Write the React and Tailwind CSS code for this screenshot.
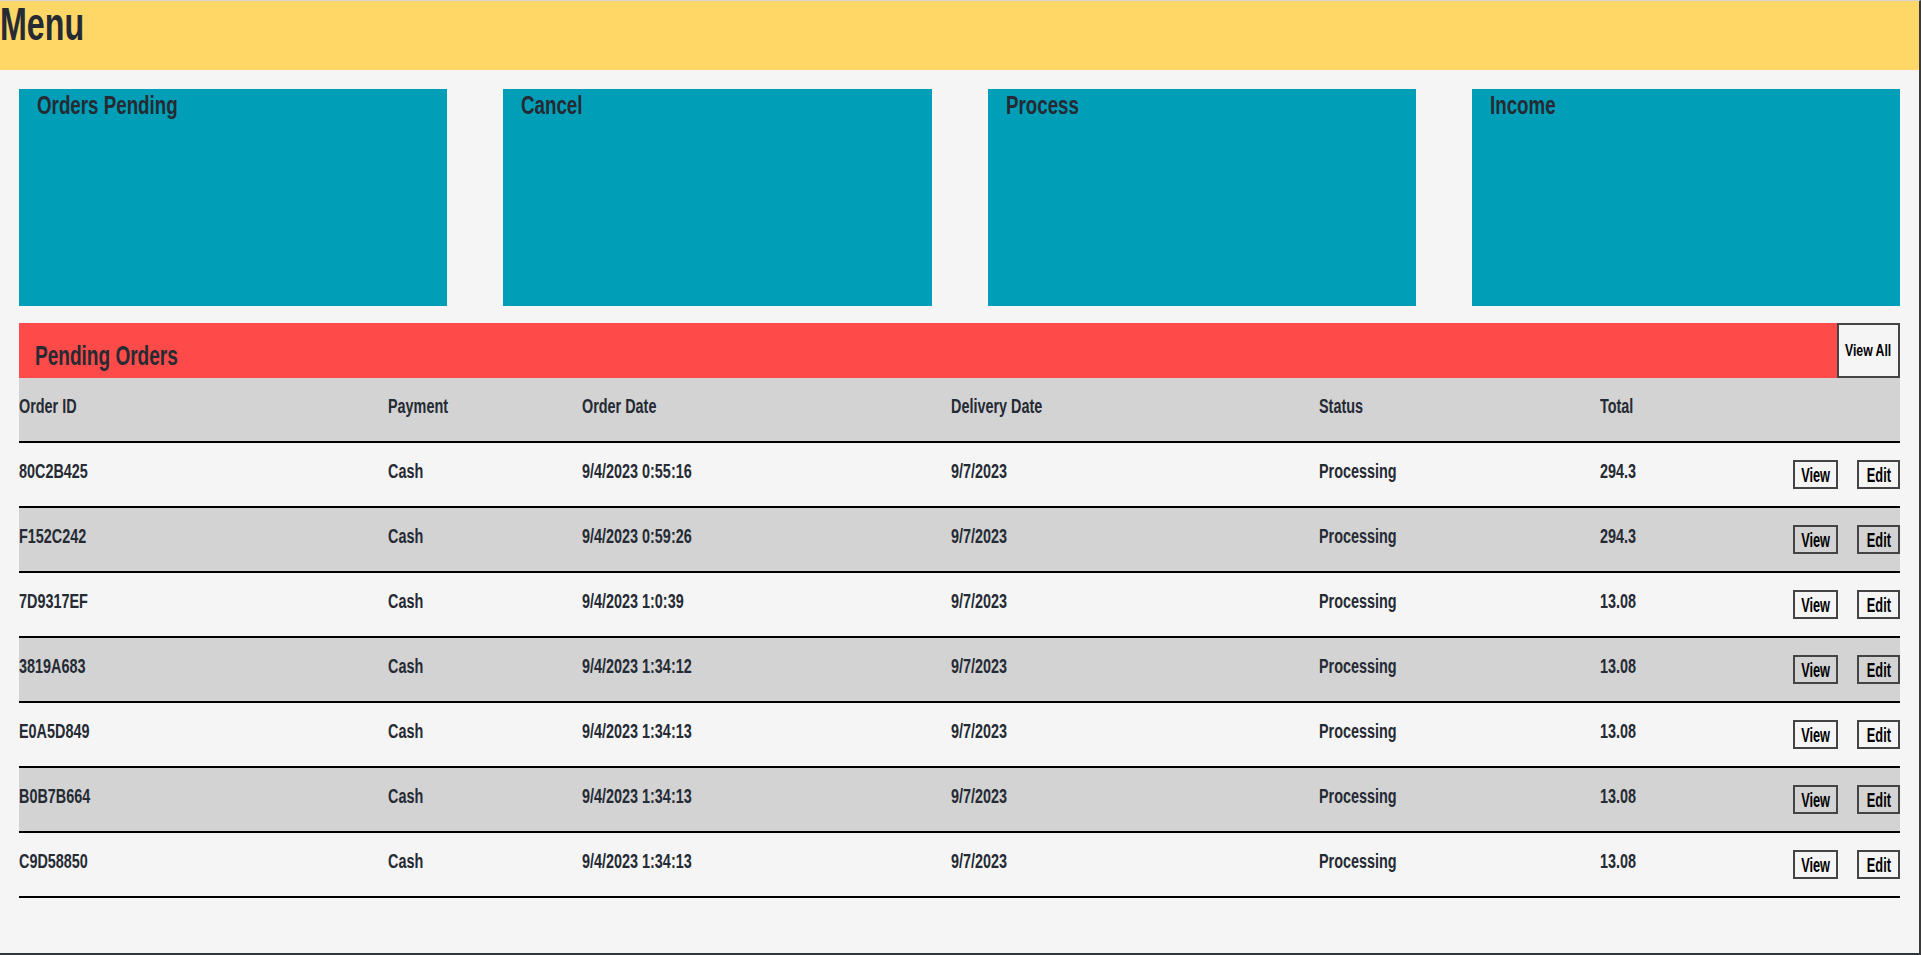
import React from 'react';

const orders = [
  { id: '80C2B425', payment: 'Cash', orderDate: '9/4/2023 0:55:16', delivery: '9/7/2023', status: 'Processing', total: '294.3' },
  { id: 'F152C242', payment: 'Cash', orderDate: '9/4/2023 0:59:26', delivery: '9/7/2023', status: 'Processing', total: '294.3' },
  { id: '7D9317EF', payment: 'Cash', orderDate: '9/4/2023 1:0:39', delivery: '9/7/2023', status: 'Processing', total: '13.08' },
  { id: '3819A683', payment: 'Cash', orderDate: '9/4/2023 1:34:12', delivery: '9/7/2023', status: 'Processing', total: '13.08' },
  { id: 'E0A5D849', payment: 'Cash', orderDate: '9/4/2023 1:34:13', delivery: '9/7/2023', status: 'Processing', total: '13.08' },
  { id: 'B0B7B664', payment: 'Cash', orderDate: '9/4/2023 1:34:13', delivery: '9/7/2023', status: 'Processing', total: '13.08' },
  { id: 'C9D58850', payment: 'Cash', orderDate: '9/4/2023 1:34:13', delivery: '9/7/2023', status: 'Processing', total: '13.08' },
];

const cards = ['Orders Pending', 'Cancel', 'Process', 'Income'];

const cols = 'grid grid-cols-[369px_194px_369px_368px_281px_1fr] leading-none';

// condensed look: the reference uses a narrow display face, squeeze Arial-metric text
const Cell = ({ children }) => (
  <span className="inline-block origin-left scale-x-[0.72] whitespace-nowrap leading-none">{children}</span>
);

const SmallBtn = ({ children, w }) => (
  <button className={`${w} h-[29px] border-2 border-[#444] text-[20px] leading-none text-black flex items-center justify-center`}>
    <span className="inline-block scale-x-[0.64] whitespace-nowrap">{children}</span>
  </button>
);

const App = () => {
  return (
    <div
      className="min-h-screen bg-[#f5f5f5] text-[#252a33] font-bold border-t border-[#d4d4d4] border-r-2 border-r-[#3a3a3a] border-b-2 border-b-[#2f3640]"
      style={{ fontFamily: '"Liberation Sans", Arial, sans-serif' }}
    >
      {/* top bar */}
      <header className="h-[69px] bg-[#FED766]">
        <h1 className="text-[46px] leading-none inline-block origin-left scale-x-[0.7] whitespace-nowrap">Menu</h1>
      </header>

      <main className="pl-[19px] pr-[19px]">
        {/* summary cards */}
        <div className="grid grid-cols-4 gap-[56px] mt-[19px]">
          {cards.map((c) => (
            <div key={c} className="h-[217px] bg-[#009FB7] px-[18px] pt-[4px]">
              <h2 className="text-[25px] leading-none inline-block origin-left scale-x-[0.75] whitespace-nowrap">{c}</h2>
            </div>
          ))}
        </div>

        {/* pending orders */}
        <div className="mt-[17px] flex h-[55px] bg-[#FE4A49]">
          <div className="flex-1 pl-[16px] pt-[19px] leading-none">
            <h2 className="text-[28px] leading-none inline-block origin-left scale-x-[0.68] whitespace-nowrap">Pending Orders</h2>
          </div>
          <button className="w-[63px] border-2 border-[#444] bg-[#f5f5f5] text-[17px] leading-none text-black flex items-center justify-center">
            <span className="inline-block scale-x-[0.72] whitespace-nowrap">View All</span>
          </button>
        </div>

        <div className={`${cols} h-[65px] bg-[#d3d3d3] border-b-2 border-black text-[20px] pt-[18px]`}>
          <div><Cell>Order ID</Cell></div>
          <div><Cell>Payment</Cell></div>
          <div><Cell>Order Date</Cell></div>
          <div><Cell>Delivery Date</Cell></div>
          <div><Cell>Status</Cell></div>
          <div><Cell>Total</Cell></div>
        </div>

        {orders.map((o, i) => (
          <div
            key={o.id}
            className={`${cols} h-[65px] border-b-2 border-black text-[20px] ${i % 2 === 1 ? 'bg-[#d3d3d3]' : ''}`}
          >
            <div className="pt-[18px]"><Cell>{o.id}</Cell></div>
            <div className="pt-[18px]"><Cell>{o.payment}</Cell></div>
            <div className="pt-[18px]"><Cell>{o.orderDate}</Cell></div>
            <div className="pt-[18px]"><Cell>{o.delivery}</Cell></div>
            <div className="pt-[18px]"><Cell>{o.status}</Cell></div>
            <div className="flex justify-between">
              <div className="pt-[18px]"><Cell>{o.total}</Cell></div>
              <div className="flex gap-[19px] pt-[17px]">
                <SmallBtn w="w-[45px]">View</SmallBtn>
                <SmallBtn w="w-[43px]">Edit</SmallBtn>
              </div>
            </div>
          </div>
        ))}
      </main>
    </div>
  );
};

export default App;
